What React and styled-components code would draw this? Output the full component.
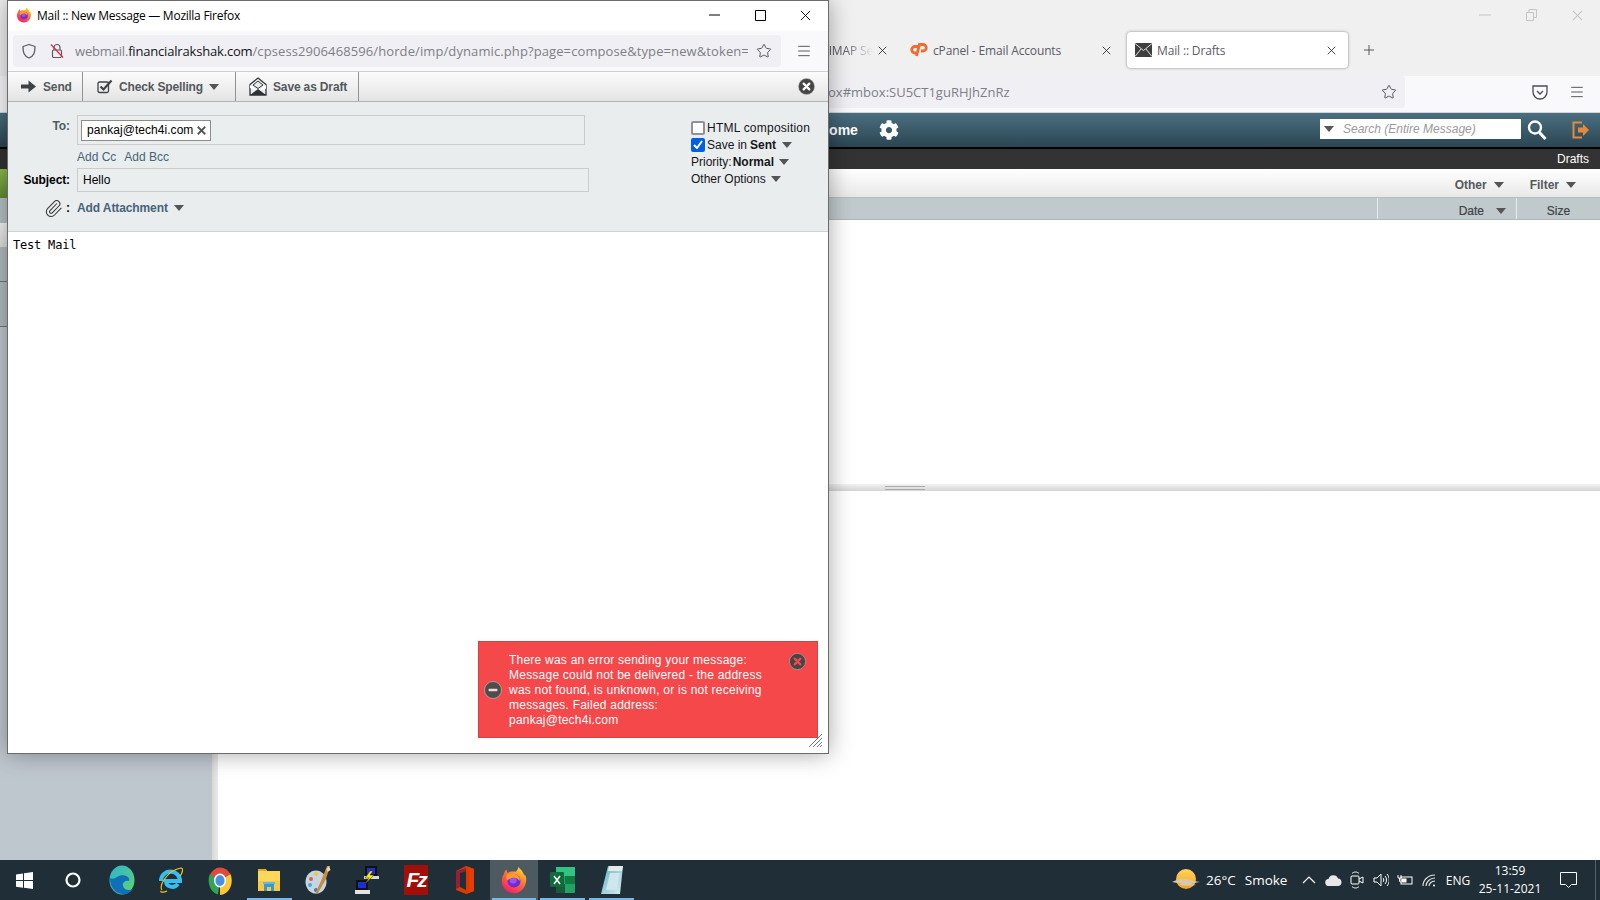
import React from 'react';
import styled, { createGlobalStyle } from 'styled-components';
import { Star, Paperclip, Plus, Menu } from 'lucide-react';
import { FaCog } from 'react-icons/fa';

const GlobalStyle = createGlobalStyle`
  html, body { margin: 0; padding: 0; height: 100%; overflow: hidden; background: #fff; }
  * { box-sizing: border-box; }
  #root { height: 100%; }
`;

const chrome = `'Open Sans', 'Noto Sans', sans-serif`;
const horde = `'Liberation Sans', Arial, sans-serif`;

const Screen = styled.div`
  position: relative;
  width: 1600px;
  height: 900px;
  display: flex;
  flex-direction: column;
  overflow: hidden;
`;

/* ---------- browser window at the back ---------- */
const Browser = styled.div`
  flex: 1;
  min-height: 0;
  display: flex;
  flex-direction: column;
`;
const TabBar = styled.div`
  height: 76px;
  background: #f0f0f0;
  position: relative;
  display: flex;
  align-items: flex-start;
  padding: 32px 0 0 683px;
  font: 12px ${chrome};
  letter-spacing: -0.15px;
  color: #5b5b66;
`;
const WindowCaps = styled.div`
  position: absolute;
  top: 0;
  right: 0;
  display: flex;
  color: #c4c4c4;
`;
const Cap = styled.div`
  width: 46px;
  height: 30px;
  display: flex;
  align-items: center;
  justify-content: center;
`;
const Tab = styled.div`
  width: 221px;
  height: 36px;
  margin-right: ${(p) => p.$gap || 1}px;
  display: flex;
  align-items: center;
  gap: 5px;
  padding: 0 ${(p) => p.$right}px 0 ${(p) => (p.$active ? 8 : 5)}px;
  border-radius: 4px;
  background: ${(p) => (p.$active ? '#fff' : 'transparent')};
  box-shadow: ${(p) => (p.$active ? '0 0 3px rgba(0,0,0,.45)' : 'none')};
`;
const TabLabel = styled.span`
  flex: 1;
  min-width: 0;
  overflow: hidden;
  white-space: nowrap;
  ${(p) => p.$fade && 'text-align: right; mask-image: linear-gradient(to right, #000 85%, transparent);'}
  margin-top: 1px;
`;
const NewTab = styled(Plus)`
  margin-top: 10px;
  margin-left: 1px;
`;
const NavBar = styled.div`
  height: 37px;
  background: #f9f9fb;
  border-bottom: 1px solid #d4d4d8;
  position: relative;
  display: flex;
  align-items: flex-start;
  padding: 0 0 0 828px;
`;
const BackUrl = styled.div`
  width: 577px;
  height: 32px;
  border-radius: 4px;
  background: #f0f0f4;
  display: flex;
  align-items: center;
  justify-content: space-between;
  padding: 0 8px 0 0;
  font: 13px ${chrome};
  color: #7e7e87;
`;
const NavTools = styled.div`
  display: flex;
  align-items: center;
  height: 32px;
  margin-left: 127px;
  gap: 21px;
  color: #4a4a55;
`;
const TealHeader = styled.div`
  height: 34px;
  background: linear-gradient(#4a6f80, #2b4552);
  display: flex;
  align-items: center;
  color: #fff;
  font: bold 14px ${horde};
`;
const HomeLink = styled.span`
  margin-left: 819px;
`;
const Gear = styled.span`
  margin-left: 21px;
  display: flex;
`;
const SearchBox = styled.div`
  margin-left: auto;
  margin-bottom: 2px;
  width: 201px;
  height: 20px;
  background: #fff;
  display: flex;
  align-items: center;
  gap: 9px;
  padding-left: 4px;
  font: italic 12px ${horde};
  color: #9a9a9a;
`;
const HeaderIcon = styled.span`
  display: flex;
  margin-left: ${(p) => p.$left}px;
  margin-right: ${(p) => p.$right || 0}px;
`;
const BlackLine = styled.div`
  height: 2px;
  background: #000;
`;
const FolderBar = styled.div`
  height: 20px;
  background: #333;
  color: #fff;
  font: 12px ${horde};
  display: flex;
  align-items: center;
  justify-content: flex-end;
  padding-right: 11px;
`;
const Workspace = styled.div`
  flex: 1;
  min-height: 0;
  display: flex;
`;
const Sidebar = styled.div`
  width: 212px;
  background: #bfc7ce;
  display: flex;
  flex-direction: column;
`;
const NewButton = styled.div`
  height: 29px;
  background: linear-gradient(#8cbd4e, #5f8a32);
`;
const SideGrey = styled.div`
  height: 25px;
  background: #b7c0c4;
`;
const SideLight = styled.div`
  height: 24px;
  background: linear-gradient(#f4f4f4, #dcdcdc);
`;
const SideRow = styled.div`
  height: ${(p) => p.$h}px;
  background: #b1bbbe;
  border-bottom: 1px solid #6f7a7e;
`;
const Splitter = styled.div`
  width: 6px;
  background: linear-gradient(to right, #d8d8d8, #e8e8e8);
`;
const Content = styled.div`
  flex: 1;
  min-width: 0;
  display: flex;
  flex-direction: column;
  background: #fff;
`;
const ListToolbar = styled.div`
  height: 29px;
  border-bottom: 1px solid #b5bdc0;
  background: linear-gradient(#fff, #e8e8e8);
  display: flex;
  align-items: center;
  justify-content: flex-end;
  gap: 26px;
  padding: 4px 24px 0 0;
  font: bold 12px ${horde};
  color: #56595c;
`;
const HeadRow = styled.div`
  height: 22px;
  background: #c0c9cc;
  border-bottom: 1px solid #aeb7ba;
  display: flex;
  justify-content: flex-end;
  font: 12px ${horde};
  -webkit-text-stroke: 0.2px #3e4346;
  color: #3e4346;
`;
const HeadCell = styled.div`
  width: ${(p) => p.$w}px;
  padding-top: 4px;
  border-left: 1px solid #e7ebec;
  display: flex;
  align-items: center;
  justify-content: ${(p) => (p.$center ? 'center' : 'flex-end')};
  gap: 12px;
  padding-right: ${(p) => (p.$center ? 0 : 10)}px;
`;
const ListPane = styled.div`
  height: 264px;
  background: #fff;
`;
const PaneSplit = styled.div`
  height: 7px;
  background: linear-gradient(#f2f2f2, #d4d4d4);
  display: flex;
  align-items: center;
  padding-left: 667px;
`;
const Grip = styled.div`
  width: 40px;
  height: 4px;
  border-top: 1px solid #aaa;
  border-bottom: 1px solid #aaa;
`;
const Caret = styled.span`
  display: inline-block;
  flex: none;
  width: 0;
  height: 0;
  border-left: 5.5px solid transparent;
  border-right: 5.5px solid transparent;
  border-top: 6px solid #555;
  margin-left: ${(p) => p.$left || 0}px;
  vertical-align: 1px;
`;

/* ---------- compose popup ---------- */
const Popup = styled.div`
  position: absolute;
  left: 7px;
  top: 0;
  width: 822px;
  height: 754px;
  border: 1px solid #6b6b6b;
  background: #fff;
  box-shadow: 0 0 22px rgba(0, 0, 0, 0.35);
  display: flex;
  flex-direction: column;
`;
const TitleBar = styled.div`
  height: 30px;
  flex: none;
  background: #fff;
  display: flex;
  align-items: center;
  padding: 0 0 2px 8px;
  font: 12px ${chrome};
  color: #000;
`;
const TitleText = styled.span`
  flex: 1;
  margin-left: 5px;
  letter-spacing: -0.25px;
`;
const TitleBtn = styled.div`
  width: 45px;
  height: 28px;
  margin-right: ${(p) => p.$shift || 0}px;
  display: flex;
  align-items: center;
  justify-content: center;
`;
const UrlRow = styled.div`
  height: 41px;
  flex: none;
  background: #f9f9fb;
  border-bottom: 1px solid #cfcfd3;
  display: flex;
  align-items: flex-start;
  padding: 4px 0 0 5px;
`;
const UrlField = styled.div`
  width: 768px;
  height: 32px;
  border-radius: 4px;
  background: #f0f0f4;
  display: flex;
  align-items: center;
  padding: 0 9px 0 8px;
  color: #5b5b66;
`;
const LockGap = styled.span`
  width: 12px;
  flex: none;
`;
const UrlText = styled.div`
  flex: 1;
  min-width: 0;
  margin: 0 8px 0 10px;
  overflow: hidden;
  white-space: nowrap;
  font: 13px ${chrome};
  letter-spacing: 0.1px;
  color: #7e7e87;
`;
const UrlHost = styled.span`
  letter-spacing: -0.18px;
  color: ${(p) => p.$muted ? '#7e7e87' : '#15141a'};
`;
const UrlMenu = styled.div`
  margin-left: 15px;
  padding-top: 8px;
  color: #4a4a55;
  display: flex;
`;
const Toolbar = styled.div`
  height: 30px;
  flex: none;
  background: linear-gradient(#fbfbfb, #e4e4e4);
  border-bottom: 1px solid #aeb2b4;
  display: flex;
  align-items: stretch;
  font: bold 12px ${horde};
  letter-spacing: -0.15px;
  color: #54585c;
  position: relative;
`;
const ToolButton = styled.div`
  display: flex;
  align-items: center;
  gap: ${(p) => p.$gap || 7}px;
  width: ${(p) => p.$w}px;
  padding-left: ${(p) => p.$pad}px;
  border-right: 1px solid #8f9396;
`;
const CloseCompose = styled.div`
  position: absolute;
  right: 13px;
  top: 6px;
  display: flex;
`;
const Form = styled.div`
  height: 130px;
  flex: none;
  background: #e9edee;
  border-bottom: 1px solid #cfd3d4;
  display: flex;
  font: 12px ${horde};
`;
const Fields = styled.div`
  width: 683px;
  padding-top: 13px;
  display: grid;
  grid-template-columns: 62px 1fr;
  column-gap: 7px;
  grid-auto-rows: min-content;
  align-content: start;
`;
const Label = styled.div`
  text-align: right;
  font-weight: bold;
  letter-spacing: -0.1px;
  color: ${(p) => p.$color || '#000'};
  padding-top: ${(p) => p.$top || 0}px;
`;
const InputBox = styled.div`
  width: ${(p) => p.$w}px;
  height: ${(p) => p.$h}px;
  border: 1px solid #ccc;
  background: #eaeeef;
  display: flex;
  align-items: center;
  padding-left: ${(p) => p.$pad}px;
  color: #000;
`;
const Pill = styled.div`
  width: 130px;
  height: 21px;
  background: #fff;
  border: 1px solid #8c8c8c;
  display: flex;
  align-items: center;
  justify-content: space-between;
  padding: 0 4px 0 5px;
  letter-spacing: 0.05px;
`;
const AddLinks = styled.div`
  grid-column: 2;
  height: 23px;
  display: flex;
  align-items: center;
  gap: 8px;
  color: #48637a;
`;
const AttachLabel = styled.div`
  display: flex;
  justify-content: flex-end;
  align-items: center;
  gap: 3px;
  height: 24px;
  margin-top: 4px;
  font-weight: bold;
`;
const AttachLink = styled.div`
  display: flex;
  align-items: center;
  gap: 6px;
  height: 24px;
  margin-top: 4px;
  font-weight: bold;
  letter-spacing: -0.1px;
  color: #48637a;
`;
const Options = styled.div`
  padding-top: 17px;
  display: flex;
  flex-direction: column;
  color: #15151a;
`;
const OptionRow = styled.div`
  height: 17px;
  display: flex;
  align-items: center;
  white-space: nowrap;
  letter-spacing: ${(p) => p.$spread || 0}px;
`;
const Strong = styled.b`
  margin-left: ${(p) => p.$left}px;
`;
const Check = styled.span`
  width: 14px;
  height: 14px;
  margin-right: 2px;
  border-radius: 2px;
  border: 2px solid ${(p) => (p.$on ? '#0060df' : '#8f8f9d')};
  background: ${(p) => (p.$on ? '#0060df' : '#fff')};
  display: flex;
  align-items: center;
  justify-content: center;
`;
const Body = styled.div`
  flex: 1;
  position: relative;
  background: #fff;
  padding: 6px 0 0 5px;
  font: 12px/14px 'DejaVu Sans Mono', monospace;
  letter-spacing: -0.2px;
  color: #000;
`;
const ErrorBox = styled.div`
  position: absolute;
  right: 10px;
  bottom: 15px;
  width: 340px;
  height: 97px;
  background: #f4484b;
  border: 1px solid #d84144;
  color: #fff;
  font: 12px/15px ${horde};
  letter-spacing: 0.23px;
  padding: 11px 50px 0 30px;
`;
const ErrorIcon = styled.span`
  position: absolute;
  left: 5px;
  top: 39px;
  display: flex;
`;
const ErrorClose = styled.span`
  position: absolute;
  right: 11px;
  top: 11px;
  display: flex;
`;
const Resizer = styled.span`
  position: absolute;
  right: 5px;
  bottom: 5px;
  display: flex;
`;

/* ---------- taskbar ---------- */
const Taskbar = styled.div`
  height: 40px;
  flex: none;
  background: #1f2e37;
  display: flex;
  align-items: center;
  position: relative;
  color: #fff;
  font: 13px ${chrome};
`;
const Tile = styled.div`
  width: 48.96px;
  height: 40px;
  flex: none;
  position: relative;
  display: flex;
  align-items: center;
  justify-content: center;
  background: ${(p) => (p.$active ? '#4d5a62' : 'transparent')};
  &::after {
    content: '';
    display: ${(p) => (p.$open ? 'block' : 'none')};
    position: absolute;
    left: 2px;
    right: 2px;
    bottom: 0;
    height: 2px;
    background: #76b9ed;
  }
`;
const Tray = styled.div`
  margin-left: auto;
  display: flex;
  align-items: center;
  height: 40px;
`;
const Weather = styled.div`
  display: flex;
  align-items: center;
  width: 125px;
  font-size: 13.5px;
  gap: 6px;
`;
const Smoke = styled.span`
  margin-left: 3px;
`;
const TrayIcon = styled.div`
  width: 24px;
  display: flex;
  justify-content: center;
`;
const Lang = styled.div`
  width: 28px;
  margin-left: 3px;
  font-size: 12px;
  text-align: center;
`;
const Clock = styled.div`
  width: 76px;
  text-align: center;
  font-size: 12px;
  line-height: 18px;
`;
const Notify = styled.div`
  width: 40px;
  display: flex;
  justify-content: center;
`;
const ShowDesktop = styled.div`
  width: 13px;
  height: 40px;
  margin-left: -1px;
  padding-left: 8px;
  &::before {
    content: '';
    display: block;
    width: 1px;
    height: 40px;
    background: #51606a;
  }
`;

/* ---------- drawings ---------- */
const FirefoxIcon = ({ size = 16, id = 'ff' }) => (
  <svg width={size} height={size} viewBox="0 0 32 32">
    <defs>
      <linearGradient id={`${id}a`} x1="0.8" y1="0" x2="0.2" y2="1">
        <stop offset="0" stopColor="#ffe226" />
        <stop offset="0.45" stopColor="#ff7139" />
        <stop offset="1" stopColor="#f5156c" />
      </linearGradient>
    </defs>
    <path d="M30 15c0-2-1-5-2-6 .2 1 .1 2-.2 2.500C27 7 24 4 21 1c-.5 3-2 4-3 5.500-4-.5-7-.2-9 1.500C8 7 7.500 5.500 7.500 4 6 5 5 7 4.500 9 3 11 2 14 2 17c0 8 6.300 14 14 14s14-7 14-16z" fill={`url(#${id}a)`} />
    <circle cx="16" cy="17" r="7.500" fill="#6e2fd0" />
    <circle cx="15" cy="16" r="4" fill="#a44fe8" />
    <path d="M8 10c3-2 7-2 11 0 4 2 4 5 3 7-2-4-7-5-10-3-2 1-3 3-4 2-1-2-1-4 0-6z" fill="#ff9a2e" />
  </svg>
);

const X = ({ size = 12, color = 'currentColor', w = 1.1 }) => (
  <svg width={size} height={size} viewBox="0 0 12 12">
    <path d="M1 1l10 10M11 1L1 11" stroke={color} strokeWidth={w} fill="none" />
  </svg>
);

const CircleClose = ({ size = 17, fg = '#fff', bg = '#454545' }) => (
  <svg width={size} height={size} viewBox="0 0 18 18">
    <circle cx="9" cy="9" r="8.500" fill={bg} stroke="#b9b9b9" strokeWidth="0.6" />
    <path d="M6 6l6 6M12 6l-6 6" stroke={fg} strokeWidth="2.400" strokeLinecap="round" />
  </svg>
);

const ShieldIcon = () => (
  <svg width="16" height="16" viewBox="0 0 16 16" fill="none" stroke="#5b5b66" strokeWidth="1.300">
    <path d="M8 1.500l6 2c0 6-1 9.500-6 11.500C3 13 2 9.500 2 3.500z" strokeLinejoin="round" />
  </svg>
);

const BrokenLock = () => (
  <svg width="16" height="16" viewBox="0 0 16 16" fill="none" stroke="#5b5b66" strokeWidth="1.200">
    <path d="M5 7V4.500a3 3 0 0 1 6 0V7" />
    <rect x="3.500" y="7" width="9" height="7.500" rx="1.200" />
    <path d="M2 1.500l12 13" stroke="#e22850" strokeWidth="1.300" />
  </svg>
);

const SendArrow = () => (
  <svg width="15" height="13" viewBox="0 0 15 13" fill="#3f4245">
    <path d="M0 4.500h7.500V0.500L15 6.500l-7.500 6V8.500H0z" />
  </svg>
);

const SpellIcon = () => (
  <svg width="16" height="15" viewBox="0 0 16 15" fill="none">
    <rect x="1" y="3" width="10.500" height="10.500" rx="1.500" stroke="#3f4245" strokeWidth="1.300" />
    <path d="M3.500 7.500l3 3L14.500 1.500" stroke="#3f4245" strokeWidth="2.200" />
  </svg>
);

const DraftIcon = () => (
  <svg width="18" height="19" viewBox="0 0 18 19">
    <path d="M9 1l8 6.500V18H1V7.500z" fill="none" stroke="#2f3235" strokeWidth="1.300" />
    <path d="M1 8l8 5.500L17 8v3.500l-8 3-8-3.500z" fill="#fff" />
    <path d="M1 18l8-6 8 6z" fill="#2f3235" />
    <path d="M4 8l5-4 5 4-5 3.500z" fill="#e9e9e9" stroke="#2f3235" strokeWidth="1" />
  </svg>
);

const SearchIcon = () => (
  <svg width="22" height="22" viewBox="0 0 22 22" fill="none" stroke="#fff">
    <circle cx="9" cy="8.500" r="6" strokeWidth="2.400" />
    <path d="M13.500 13.500l6 6.500" strokeWidth="3" />
  </svg>
);

const LogoutIcon = () => (
  <svg width="18" height="18" viewBox="0 0 18 18">
    <path d="M10 1.500H1.500v15H10" fill="none" stroke="#e58a3c" strokeWidth="2" />
    <path d="M6 6.500h5V3l6 6-6 6v-3.500H6z" fill="#e58a3c" />
  </svg>
);

const CpanelIcon = () => (
  <svg width="18" height="14" viewBox="0 0 18 14" fill="none" stroke="#f26a30" strokeWidth="2.800">
    <path d="M8 3.500H5a3 3 0 0 0 0 6.500h2" />
    <path d="M6.500 13L9.500 1.500H13a3 3 0 0 1 0 6.500h-2" />
  </svg>
);

const MailIcon = () => (
  <svg width="17" height="14" viewBox="0 0 17 14">
    <rect width="17" height="14" fill="#3e3e3e" />
    <path d="M0 .500l8.500 7 8.500-7M0 13.500l6-7.500M17 13.500L11 6" stroke="#e0e0e0" fill="none" />
  </svg>
);

const WinLogo = () => (
  <svg width="17" height="17" viewBox="0 0 17 17" fill="#fff">
    <path d="M0 2.400l7-1v6.700H0zM8 1.300L17 0v8.100H8zM0 9h7v6.700l-7-1zM8 9h9v8l-9-1.300z" />
  </svg>
);

const CortanaRing = () => (
  <svg width="16" height="16" viewBox="0 0 16 16" fill="none">
    <circle cx="8" cy="8" r="6.500" stroke="#fff" strokeWidth="2.200" />
  </svg>
);

const EdgeIcon = () => (
  <svg width="26" height="30" viewBox="0 0 26 30">
    <defs>
      <linearGradient id="edgeG" x1="0" y1="0" x2="1" y2="1">
        <stop offset="0" stopColor="#2bb5d8" />
        <stop offset="1" stopColor="#63d466" />
      </linearGradient>
    </defs>
    <ellipse cx="13" cy="15" rx="12.500" ry="14.500" fill="url(#edgeG)" />
    <path d="M1 13c0 10 6 16 13 16 5 0 8-2 10-5-4 2-9 1-10-3-1-3 2-6 6-5 2-5-7-8-12-4-3 2-5 2-7 1z" fill="#0f6fb8" />
  </svg>
);

const IeIcon = () => (
  <svg width="26" height="28" viewBox="0 0 26 28" fill="none">
    <path d="M3 15a9.500 9.500 0 0 1 19 0H8c0 6 8 8 12 3" stroke="#36bdf2" strokeWidth="4" />
    <path d="M4 24C0 20 10 4 23 2c3 0 1 6-1 8" stroke="#f4c21d" strokeWidth="1.200" />
    <path d="M3 25c-1 1 2 2 6 0" stroke="#f4c21d" strokeWidth="1.200" />
  </svg>
);

const ChromeIcon = () => (
  <svg width="24" height="29" viewBox="0 0 24 29">
    <path d="M12 14.500L1.800 9A12 14 0 0 1 22.500 8z" fill="#df4a3c" />
    <path d="M12 14.500L1.800 8A12 14.500 0 0 0 10 28.500z" fill="#34a353" />
    <path d="M12 14.500V29A12 14.500 0 0 0 22.500 8z" fill="#fcc934" />
    <ellipse cx="12" cy="14.500" rx="6" ry="7" fill="#fff" />
    <ellipse cx="12" cy="14.500" rx="4.600" ry="5.400" fill="#4a90e2" />
  </svg>
);

const ExplorerIcon = () => (
  <svg width="22" height="24" viewBox="0 0 22 24">
    <path d="M0 1h8l2 3h-10z" fill="#e9a820" />
    <rect y="3" width="22" height="20" fill="#fbd75c" />
    <rect y="13" width="22" height="10" fill="#f6c945" />
    <path d="M6 23v-7h10v7h-3v-4H9v4z" fill="#3a97d3" />
    <rect x="5" y="14" width="12" height="2" fill="#5dbbea" />
  </svg>
);

const PaintIcon = () => (
  <svg width="26" height="30" viewBox="0 0 26 30">
    <ellipse cx="11" cy="17" rx="10.500" ry="11.500" fill="#c5d6e2" />
    <circle cx="6" cy="14" r="2" fill="#e25c4a" />
    <circle cx="11" cy="9" r="2" fill="#f0c33c" />
    <circle cx="5" cy="20" r="2" fill="#4aa8d8" />
    <circle cx="11" cy="25" r="2" fill="#3e78c8" />
    <path d="M25 1l-3 0-6 15-6 13 3-1 8-14z" fill="#c78c3e" />
    <path d="M24 1l1.500 4-3 2-1-3z" fill="#e8d9b0" />
  </svg>
);

const NetworkIcon = () => (
  <svg width="24" height="30" viewBox="0 0 24 30">
    <rect x="10" y="1" width="12" height="10" fill="#111" />
    <rect x="12" y="3" width="8" height="6" fill="#1b2fd6" />
    <rect x="9" y="11" width="15" height="3" fill="#d8d8d8" />
    <rect x="1" y="15" width="12" height="10" fill="#111" />
    <rect x="3" y="17" width="8" height="6" fill="#1b2fd6" />
    <rect x="0" y="25" width="15" height="4" fill="#e4e4e4" />
    <path d="M15 6l-5 7 4 0-4 6 9-9-4 0 3-4z" fill="#ffe600" stroke="#222" strokeWidth="0.5" />
  </svg>
);

const FzBox = styled.div`
  width: 24px;
  height: 30px;
  background: #a30e07;
  color: #fff;
  font: italic bold 21px/30px ${horde};
  letter-spacing: -2px;
  text-align: center;
`;

const OfficeIcon = () => (
  <svg width="18" height="28" viewBox="0 0 18 28">
    <path d="M0 5l10-5 8 3v22l-8 3-10-4z" fill="#d83b01" />
    <path d="M10 0l8 3v22l-8 3 3-3V4z" fill="#eb3c00" />
    <path d="M0 5l10-3v3L4 7v14l-4 2z" fill="#9a1d36" />
    <path d="M4 7l6-2v19l-6-3z" fill="#1f2e37" />
  </svg>
);

const ExcelIcon = () => (
  <svg width="25" height="26" viewBox="0 0 25 26">
    <rect x="6" y="0" width="19" height="26" rx="1" fill="#21a366" />
    <rect x="6" y="0" width="19" height="9" fill="#33c481" />
    <rect x="15" y="9" width="10" height="8" fill="#107c41" />
    <rect x="6" y="17" width="9" height="9" fill="#185c37" />
    <rect y="5" width="14" height="15" rx="1" fill="#0f6b3a" />
    <path d="M4 9l6 8M10 9l-6 8" stroke="#fff" strokeWidth="1.500" />
  </svg>
);

const NotesIcon = () => (
  <svg width="22" height="28" viewBox="0 0 22 28">
    <defs>
      <linearGradient id="noteG" x1="0" y1="0" x2="1" y2="1">
        <stop offset="0" stopColor="#5fb2c4" />
        <stop offset="1" stopColor="#dbeef2" />
      </linearGradient>
    </defs>
    <path d="M7 0h15l-3 28H0z" fill="url(#noteG)" />
    <path d="M8 0h14l-1 5H7z" fill="#e5e9ea" />
    <path d="M9 7h10L16 24H5z" fill="#cfe6ec" />
  </svg>
);

const SunIcon = () => (
  <svg width="28" height="24" viewBox="0 0 28 24">
    <defs>
      <linearGradient id="sunG" x1="0" y1="0" x2="0" y2="1">
        <stop offset="0" stopColor="#ffd55a" />
        <stop offset="1" stopColor="#f9a11b" />
      </linearGradient>
    </defs>
    <circle cx="14" cy="11" r="10" fill="url(#sunG)" />
    <path d="M0 14c5-2 8-4 12-3 5 0 7 2 16 3-5 1-6 1-9 1 1 1 3 1 5 2-6 1-14 1-18-1 2 0 3 0 4-1-3 0-6 0-10-1z" fill="#d7c7ad" />
  </svg>
);

const Chevron = () => (
  <svg width="14" height="8" viewBox="0 0 14 8" fill="none" stroke="#fff" strokeWidth="1.200">
    <path d="M1 7l6-6 6 6" />
  </svg>
);
const CloudIcon = () => (
  <svg width="17" height="11" viewBox="0 0 17 11" fill="#e8e8e8">
    <path d="M4 11a3.500 3.500 0 0 1-.5-7 5 5 0 0 1 9.500-.5A3.800 3.800 0 0 1 13.500 11z" />
  </svg>
);
const MeetIcon = () => (
  <svg width="14" height="18" viewBox="0 0 14 18" fill="none" stroke="#fff">
    <rect x="1" y="5" width="8" height="8" rx="1" />
    <path d="M9 8l4-2v6l-4-2M2 2.500c2-2 5-2 7 0M2 15.500c2 2 5 2 7 0" />
  </svg>
);
const VolumeIcon = () => (
  <svg width="16" height="14" viewBox="0 0 16 14" fill="none" stroke="#fff">
    <path d="M1 5h3l4-4v12L4 9H1zM10 5c1 1 1 3 0 4M12 3c2 2 2 6 0 8M14 1c3 3 3 9 0 12" />
  </svg>
);
const BatteryIcon = () => (
  <svg width="16" height="12" viewBox="0 0 16 12" fill="none" stroke="#fff">
    <rect x="4" y="3" width="11" height="7" />
    <rect x="5" y="5" width="4" height="3" fill="#fff" />
    <path d="M1 1v3h3V1M2.500 4v3c0 1 1 1 2 1" />
  </svg>
);
const WifiIcon = () => (
  <svg width="14" height="13" viewBox="0 0 14 13" fill="none" stroke="#e4e4e4" strokeWidth="1.100">
    <path d="M1 12C1 6 6 1 13 1M4 12c0-4 4-8 9-8M7 12c0-2 2-5 6-5" />
    <circle cx="12" cy="11.500" r="1" fill="#fff" stroke="none" />
  </svg>
);
const NotifyIcon = () => (
  <svg width="17" height="16" viewBox="0 0 17 16" fill="none" stroke="#fff">
    <path d="M.5.500h16v12h-5l-3 3-3-3h-5z" />
  </svg>
);
const ResizeGrip = () => (
  <svg width="15" height="15" viewBox="0 0 15 15" stroke="#777" strokeWidth="1">
    <path d="M14 1L1 14M14 5L5 14M14 9L9 14M14 12l-2 2" />
  </svg>
);

export default function App() {
  return (
    <Screen>
      <GlobalStyle />
      <Browser>
        <TabBar>
          <WindowCaps>
            <Cap><svg width="12" height="2"><path d="M0 1h12" stroke="currentColor" /></svg></Cap>
            <Cap>
              <svg width="11" height="12" fill="none" stroke="currentColor"><path d="M.5 3.500h7v8h-7zM3 3.500V.500h7.500v8h-3" /></svg>
            </Cap>
            <Cap><X size={11} /></Cap>
          </WindowCaps>
          <Tab $right={17}>
            <TabLabel $fade>Setting IMAP Se</TabLabel>
            <X size={9} color="#222" />
          </Tab>
          <Tab $right={15}>
            <CpanelIcon />
            <TabLabel>cPanel - Email Accounts</TabLabel>
            <X size={9} color="#222" />
          </Tab>
          <Tab $active $gap={12} $right={12}>
            <MailIcon />
            <TabLabel>Mail :: Drafts</TabLabel>
            <X size={9} color="#222" />
          </Tab>
          <NewTab size={16} color="#444" strokeWidth={1.3} />
        </TabBar>
        <NavBar>
          <BackUrl>
            <span>ox#mbox:SU5CT1guRHJhZnRz</span>
            <Star size={16} color="#4a4a55" strokeWidth={1.4} />
          </BackUrl>
          <NavTools>
            <svg width="16" height="15" viewBox="0 0 16 15" fill="none" stroke="currentColor" strokeWidth="1.300">
              <path d="M1 1h14v6a7 7 0 0 1-14 0z" />
              <path d="M5 6l3 3 3-3" />
            </svg>
            <Menu size={16} strokeWidth={1.4} />
          </NavTools>
        </NavBar>
        <TealHeader>
          <HomeLink>Home</HomeLink>
          <Gear><FaCog size={20} /></Gear>
          <SearchBox>
            <Caret />
            Search (Entire Message)
          </SearchBox>
          <HeaderIcon $left={5}><SearchIcon /></HeaderIcon>
          <HeaderIcon $left={24} $right={10}><LogoutIcon /></HeaderIcon>
        </TealHeader>
        <BlackLine />
        <FolderBar>Drafts</FolderBar>
        <Workspace>
          <Sidebar>
            <NewButton />
            <SideGrey />
            <SideLight />
            <SideRow $h={35} />
            <SideRow $h={45} />
          </Sidebar>
          <Splitter />
          <Content>
            <ListToolbar>
              <span>Other<Caret $left={7} /></span>
              <span>Filter<Caret $left={7} /></span>
            </ListToolbar>
            <HeadRow>
              <HeadCell $w={139}>Date<Caret /></HeadCell>
              <HeadCell $w={84} $center>Size</HeadCell>
            </HeadRow>
            <ListPane />
            <PaneSplit><Grip /></PaneSplit>
          </Content>
        </Workspace>
      </Browser>

      <Popup>
        <TitleBar>
          <FirefoxIcon size={16} id="t" />
          <TitleText>Mail :: New Message — Mozilla Firefox</TitleText>
          <TitleBtn $shift={1}><svg width="11" height="2"><path d="M0 1h11" stroke="#000" /></svg></TitleBtn>
          <TitleBtn><svg width="11" height="11" fill="none" stroke="#000"><path d="M.5.500h10v10h-10z" /></svg></TitleBtn>
          <TitleBtn><X size={11} color="#000" w={1} /></TitleBtn>
        </TitleBar>
        <UrlRow>
          <UrlField>
            <ShieldIcon />
            <LockGap />
            <BrokenLock />
            <UrlText>
              <UrlHost $muted>webmail.</UrlHost><UrlHost>financialrakshak.com</UrlHost>/cpsess2906468596/horde/imp/dynamic.php?page=compose&amp;type=new&amp;token=b3f9c7a1e2d4
            </UrlText>
            <Star size={16} color="#4a4a55" strokeWidth={1.4} />
          </UrlField>
          <UrlMenu><Menu size={16} strokeWidth={1.4} /></UrlMenu>
        </UrlRow>
        <Toolbar>
          <ToolButton $w={75} $pad={13} $gap={7}><SendArrow />Send</ToolButton>
          <ToolButton $w={153} $pad={14} $gap={6}><SpellIcon />Check Spelling<Caret /></ToolButton>
          <ToolButton $w={123} $pad={13} $gap={6}><DraftIcon />Save as Draft</ToolButton>
          <CloseCompose><CircleClose /></CloseCompose>
        </Toolbar>
        <Form>
          <Fields>
            <Label $color="#4f5b63" $top={4}>To:</Label>
            <InputBox $w={508} $h={30} $pad={3}>
              <Pill>pankaj@tech4i.com<X size={9} color="#555" w={2.4} /></Pill>
            </InputBox>
            <AddLinks><span>Add Cc</span><span>Add Bcc</span></AddLinks>
            <Label $top={5}>Subject:</Label>
            <InputBox $w={512} $h={24} $pad={5}>Hello</InputBox>
            <AttachLabel>
              <Paperclip size={19} color="#333" strokeWidth={1.3} />
              :
            </AttachLabel>
            <AttachLink>Add Attachment<Caret /></AttachLink>
          </Fields>
          <Options>
            <OptionRow $spread={0.22}><Check />HTML composition</OptionRow>
            <OptionRow>
              <Check $on>
                <svg width="10" height="9" viewBox="0 0 10 9" fill="none" stroke="#fff" strokeWidth="2"><path d="M1 5l3 3 5-7" /></svg>
              </Check>
              Save in<Strong $left={3}>Sent</Strong><Caret $left={6} />
            </OptionRow>
            <OptionRow>Priority:<Strong $left={1}>Normal</Strong><Caret $left={5} /></OptionRow>
            <OptionRow>Other Options<Caret $left={5} /></OptionRow>
          </Options>
        </Form>
        <Body>
          Test Mail
          <ErrorBox>
            <ErrorIcon>
              <svg width="18" height="18" viewBox="0 0 18 18">
                <circle cx="9" cy="9" r="8.500" fill="#4d4d4d" stroke="#c9c9c9" strokeWidth="0.6" />
                <rect x="4.500" y="7.800" width="9" height="2.400" rx="1" fill="#f6d6d6" />
              </svg>
            </ErrorIcon>
            There was an error sending your message: Message could not be delivered - the address was not found, is unknown, or is not receiving messages. Failed address: pankaj@tech4i.com
            <ErrorClose><CircleClose fg="#f4484b" /></ErrorClose>
          </ErrorBox>
          <Resizer><ResizeGrip /></Resizer>
        </Body>
      </Popup>

      <Taskbar>
        <Tile><WinLogo /></Tile>
        <Tile><CortanaRing /></Tile>
        <Tile><EdgeIcon /></Tile>
        <Tile><IeIcon /></Tile>
        <Tile><ChromeIcon /></Tile>
        <Tile $open><ExplorerIcon /></Tile>
        <Tile><PaintIcon /></Tile>
        <Tile><NetworkIcon /></Tile>
        <Tile><FzBox>Fz</FzBox></Tile>
        <Tile><OfficeIcon /></Tile>
        <Tile $active $open><FirefoxIcon size={28} id="b" /></Tile>
        <Tile $open><ExcelIcon /></Tile>
        <Tile $open><NotesIcon /></Tile>
        <Tray>
          <Weather>
            <SunIcon />
            26°C <Smoke>Smoke</Smoke>
          </Weather>
          <TrayIcon><Chevron /></TrayIcon>
          <TrayIcon><CloudIcon /></TrayIcon>
          <TrayIcon><MeetIcon /></TrayIcon>
          <TrayIcon><VolumeIcon /></TrayIcon>
          <TrayIcon><BatteryIcon /></TrayIcon>
          <TrayIcon><WifiIcon /></TrayIcon>
          <Lang>ENG</Lang>
          <Clock>13:59<br />25-11-2021</Clock>
          <Notify><NotifyIcon /></Notify>
          <ShowDesktop />
        </Tray>
      </Taskbar>
    </Screen>
  );
}
